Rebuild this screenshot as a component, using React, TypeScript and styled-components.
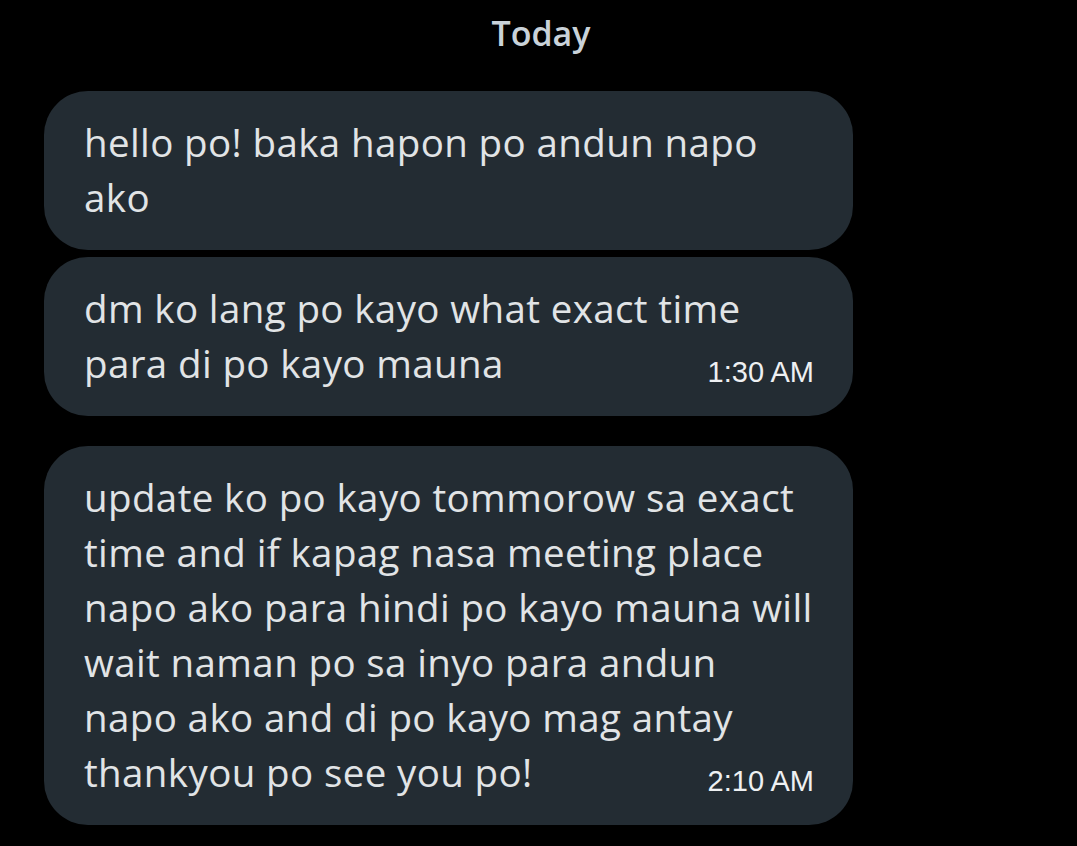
import React from "react";
import styled, { createGlobalStyle } from "styled-components";

const GlobalStyle = createGlobalStyle`
  html, body {
    margin: 0;
    padding: 0;
    background: #000000;
  }
  body {
    font-family: "Open Sans", "Noto Sans", Arial, sans-serif;
    -webkit-font-smoothing: antialiased;
  }
`;

const Page = styled.div`
  width: 1077px;
  height: 846px;
  background: #000000;
  display: flex;
  flex-direction: column;
  overflow: hidden;
`;

const DayHeader = styled.div`
  height: 91px;
  display: flex;
  justify-content: center;
  align-items: flex-start;
  padding-top: 11px;
  box-sizing: border-box;
  padding-left: 5px;
  color: #c9d2d9;
  font-size: 34px;
  font-weight: 600;
  line-height: 44px;
`;

const Thread = styled.div`
  display: flex;
  flex-direction: column;
  padding-left: 44px;
`;

const Group = styled.div<{ $gapAfter: number }>`
  display: flex;
  flex-direction: column;
  gap: 7px;
  margin-bottom: ${(p) => p.$gapAfter}px;
`;

const Bubble = styled.div`
  width: 809px;
  box-sizing: border-box;
  background: #232c33;
  border-radius: 44px;
  padding: 24px 40px 25px 40px;
  color: #e1e4e6;
  font-size: 38.5px;
  line-height: 55px;
  letter-spacing: 0.38px;
`;

const Line = styled.div`
  white-space: nowrap;
  height: 55px;
`;

const LastLine = styled.div`
  display: flex;
  justify-content: space-between;
  align-items: baseline;
  white-space: nowrap;
  height: 55px;
`;

const Time = styled.span`
  font-family: "Liberation Sans", Arial, sans-serif;
  font-size: 29px;
  line-height: 29px;
  letter-spacing: 0;
  color: #eef0f2;
  margin-right: -1px;
  position: relative;
  top: 4px;
`;

type Msg = { lines: string[]; time?: string };

const groups: { gap: number; msgs: Msg[] }[] = [
  {
    gap: 30,
    msgs: [
      { lines: ["hello po! baka hapon po andun napo", "ako"] },
      {
        lines: ["dm ko lang po kayo what exact time", "para di po kayo mauna"],
        time: "1:30 AM",
      },
    ],
  },
  {
    gap: 0,
    msgs: [
      {
        lines: [
          "update ko po kayo tommorow sa exact",
          "time and if kapag nasa meeting place",
          "napo ako para hindi po kayo mauna will",
          "wait naman po sa inyo para andun",
          "napo ako and di po kayo mag antay",
          "thankyou po see you po!",
        ],
        time: "2:10 AM",
      },
    ],
  },
];

function MessageBubble({ msg }: { msg: Msg }) {
  const body = msg.lines.slice(0, -1);
  const last = msg.lines[msg.lines.length - 1];
  return (
    <Bubble>
      {body.map((l, i) => (
        <Line key={i}>{l}</Line>
      ))}
      <LastLine>
        <span>{last}</span>
        {msg.time && <Time>{msg.time}</Time>}
      </LastLine>
    </Bubble>
  );
}

export default function App() {
  return (
    <>
      <GlobalStyle />
      <Page>
        <DayHeader>Today</DayHeader>
        <Thread>
          {groups.map((g, gi) => (
            <Group key={gi} $gapAfter={g.gap}>
              {g.msgs.map((m, mi) => (
                <MessageBubble key={mi} msg={m} />
              ))}
            </Group>
          ))}
        </Thread>
      </Page>
    </>
  );
}
